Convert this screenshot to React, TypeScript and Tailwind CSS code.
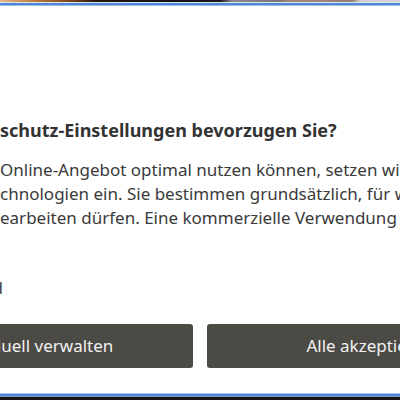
const font = { fontFamily: '"Noto Sans", "Open Sans", sans-serif' };

export default function App() {
  return (
    <div className="flex h-[400px] w-[400px] flex-col overflow-hidden bg-white antialiased" style={font}>
      {/* page photo peeking above the dialog */}
      <div className="h-[2px] bg-[linear-gradient(to_right,#e2b48c_0%,#c4803c_8%,#7a4214_18%,#24160c_24%,#121212_44%,#1a1a1a_55%,#8a8a8a_58%,#767676_70%,#a48876_72%,#98806e_88%,#cfcfcf_90%,#d4d4d4_100%)]" />
      <div className="h-px bg-[#dde6f2]" />
      <div className="h-[2px] bg-[#4d87d6]" />
      <div className="h-px bg-[#9cbbe8]" />

      <main className="flex-1 overflow-hidden">
        <h2 className="mt-[111px] whitespace-nowrap text-[18px] font-bold leading-[26px] text-[#333]">
          schutz-Einstellungen bevorzugen Sie?
        </h2>
        <p className="mt-[15px] whitespace-nowrap text-[17px] leading-[24px] text-[#3a3a3a]">
          Online-Angebot optimal nutzen können, setzen wir
          <br />
          chnologien ein. Sie bestimmen grundsätzlich, für welche
          <br />
          earbeiten dürfen. Eine kommerzielle Verwendung ist
        </p>
        <div className="mt-[46px] flex h-[24px] w-[3px] justify-end overflow-hidden text-[17px] leading-[24px] text-[#444]">
          <span className="whitespace-nowrap">Details anzeigen und Zwecke verwalten d</span>
        </div>

        <div className="mt-[24px] -ml-[133px] flex gap-[14px]">
          <button className="h-[44px] w-[326px] shrink-0 rounded-[3px] bg-[#4c4a45] text-[17px] text-[#f2f2f2]">
            Individuell verwalten
          </button>
          <button className="h-[44px] w-[326px] shrink-0 rounded-[3px] bg-[#4c4a45] text-[17px] text-[#f2f2f2]">
            Alle akzeptieren
          </button>
        </div>
      </main>

      <div className="h-px bg-[#a8c3ec]" />
      <div className="h-[2px] bg-[#4d87d6]" />
      <div className="h-px bg-[#7f97bd]" />
      <div className="h-[3px] bg-[#151515]" />
    </div>
  );
}
